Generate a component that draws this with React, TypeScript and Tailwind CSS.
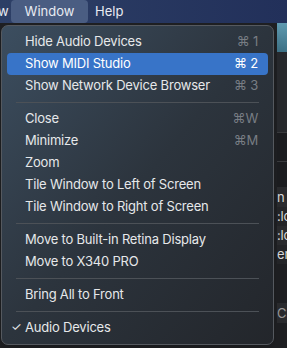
import React from "react";

type Item =
  | { kind: "sep" }
  | { kind: "item"; label: string; shortcut?: string; active?: boolean; checked?: boolean };

const items: Item[] = [
  { kind: "item", label: "Hide Audio Devices", shortcut: "⌘ 1" },
  { kind: "item", label: "Show MIDI Studio", shortcut: "⌘ 2", active: true },
  { kind: "item", label: "Show Network Device Browser", shortcut: "⌘ 3" },
  { kind: "sep" },
  { kind: "item", label: "Close", shortcut: "⌘W" },
  { kind: "item", label: "Minimize", shortcut: "⌘M" },
  { kind: "item", label: "Zoom" },
  { kind: "item", label: "Tile Window to Left of Screen" },
  { kind: "item", label: "Tile Window to Right of Screen" },
  { kind: "sep" },
  { kind: "item", label: "Move to Built-in Retina Display" },
  { kind: "item", label: "Move to X340 PRO" },
  { kind: "sep" },
  { kind: "item", label: "Bring All to Front" },
  { kind: "sep" },
  { kind: "item", label: "Audio Devices", checked: true },
];

export default function App() {
  return (
    <div
      className="relative w-[287px] h-[348px] overflow-hidden bg-[#1e1f22] text-[13px]"
      style={{ fontFamily: "Inter, 'Liberation Sans', sans-serif" }}
    >
      {/* menu bar */}
      <div className="flex h-[23px] items-center bg-gradient-to-r from-[#2d3f66] to-[#22305a] text-[#e8ebf2]">
        <span className="-ml-[2px] w-[13px]">w</span>
        <span className="flex h-[23px] w-[77px] items-center justify-center rounded-[4px] bg-[#4a5d82]">Window</span>
        <span className="pl-[7px]">Help</span>
      </div>

      {/* window behind */}
      <div className="flex flex-col pl-[277px] text-[#d9d9d9] text-[13px] tracking-[-0.2px] whitespace-nowrap overflow-hidden">
        <div className="h-[29px] bg-gradient-to-b from-[#5f9ab0] to-[#3d7186]" />
        <div className="h-[80px] bg-[#27292d]" />
        <div className="h-[29px] bg-[#1c1d20] border-t border-[#3a3b3e]" />
        <div className="h-[26px] bg-[#1c1d20] border-t border-[#3a3b3e]" />
        <div className="h-[20px] bg-[#2a2b2e] leading-[20px]">n M</div>
        <div className="h-[19px] bg-[#242528] leading-[19px]">:lo</div>
        <div className="h-[19px] bg-[#2a2b2e] leading-[19px]">:lo</div>
        <div className="h-[19px] bg-[#242528] leading-[19px]">er</div>
        <div className="h-[39px] bg-[#1e1f22]" />
        <div className="h-[20px] bg-[#2a2b2e] leading-[20px] text-[#9a9a9a]">CS</div>
      </div>

      {/* dropdown */}
      <div className="absolute left-[1px] top-[25px] w-[273px] rounded-[7px] border border-[#55595f] bg-gradient-to-br from-[#3c4e60] via-[#2c343d] to-[#23262b] px-[5px] py-[5px] text-[#e6e8ea] tracking-[-0.2px] shadow-lg">
        {items.map((it, i) =>
          it.kind === "sep" ? (
            <div key={i} className="mx-[9px] my-[5px] h-px bg-[#4c5157]" />
          ) : (
            <div
              key={i}
              className={
                "flex h-[22px] items-center justify-between rounded-[4px] pl-[18px] pr-[10px] " +
                (it.active ? "bg-[#3874c8] text-white" : "")
              }
            >
              <span className="relative">
                {it.checked && <span className="absolute -left-[14px] text-[12px]">✓</span>}
                {it.label}
              </span>
              {it.shortcut && (
                <span className={it.active ? "text-white" : "text-[#787d84]"}>{it.shortcut}</span>
              )}
            </div>
          )
        )}
      </div>
    </div>
  );
}
